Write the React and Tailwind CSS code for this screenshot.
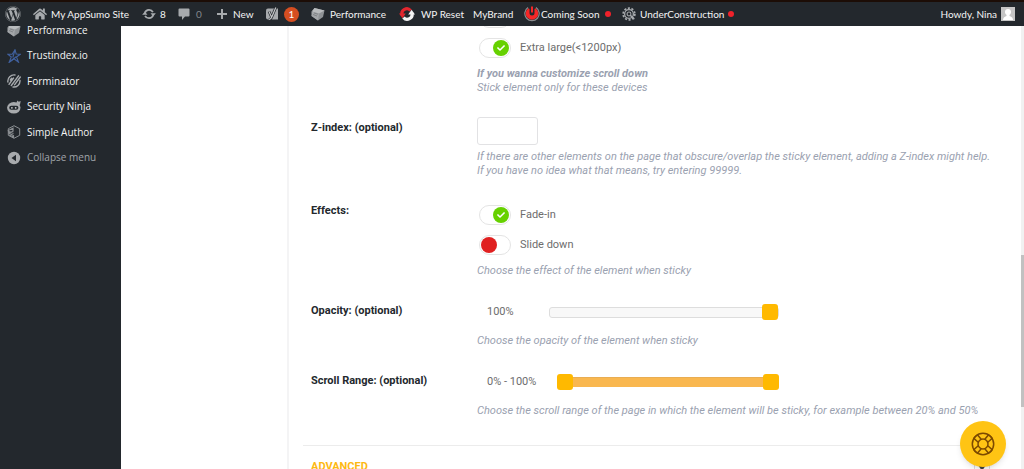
import { useState } from "react";
import { FaWordpress, FaHome, FaCheck } from "react-icons/fa";

const UpdateIcon = () => (
  <svg viewBox="0 0 20 20" className="w-3.5 h-3.5 text-[#a7aaad]" fill="none" stroke="currentColor" strokeWidth="2.6">
    <path d="M4.2 8.2A6.2 6.2 0 0 1 15.6 7.4M15.8 11.8A6.2 6.2 0 0 1 4.4 12.6" />
    <path d="M0.2 11.2h7.600L4.1 6.600zM12.200 8.8h7.600L15.9 13.400z" fill="currentColor" stroke="none" />
  </svg>
);

const CommentIcon = () => (
  <svg viewBox="0 0 12 14" className="w-3 h-3.5 text-[#a7aaad]" fill="currentColor">
    <path d="M1.5 1.5h9q1 0 1 1v6q0 1-1 1H7L4 13V9.500H1.500q-1 0-1-1v-6q0-1 1-1z" />
  </svg>
);

const PlusIcon = () => (
  <svg viewBox="0 0 10 10" className="w-2.5 h-2.5 text-[#a7aaad]" fill="currentColor">
    <path d="M4 0h2v4h4v2H6v4H4V6H0V4h4z" />
  </svg>
);

const YoastIcon = () => (
  <svg viewBox="0 0 14 14" className="w-3.5 h-3.5">
    <path d="M3 1.500h7.500l2.500 0V12.500H3q-2 0-2-2v-7q0-2 2-2z" fill="#a7aaad" />
    <path d="M4 4.500l2.500 5.500M11 0L6.800 10Q6 12.500 3.800 12.800" fill="none" stroke="#23282d" strokeWidth="2.600" />
    <path d="M4 4.500l2.500 5.500M10.800 .5L6.800 10Q6 12.300 3.800 12.600" fill="none" stroke="#c4c6c8" strokeWidth="1.200" />
  </svg>
);

const CubeIcon = () => (
  <svg viewBox="0 0 14 14" className="w-3.5 h-3.5">
    <path d="M3.500 1l10 2.500-1.500 6.500-5 3.500-6.500-4.500z" fill="#8f9396" />
    <path d="M3.500 1l10 2.500-5.500 3-7.500-2z" fill="#b9bcbe" />
    <path d="M.5 4.500l7.500 2-1 7-6.500-4.500z" fill="#a3a6a9" />
    <path d="M2 7.500l4 1.500M3 6l4 1.200" stroke="#777b7e" strokeWidth=".8" />
  </svg>
);

const ResetIcon = () => (
  <svg viewBox="0 0 16 16" className="w-4 h-4" fill="none" strokeWidth="3.200">
    <path d="M3.200 9A4.800 4.800 0 0 1 11.500 4.500" stroke="#e3262e" />
    <path d="M0 7.500h6.800L3.400 12.200z" fill="#e3262e" />
    <path d="M12.800 7A4.800 4.800 0 0 1 4.500 11.500" stroke="#f4f4f4" />
    <path d="M9.200 8.500H16L12.600 3.800z" fill="#f4f4f4" />
  </svg>
);

const PowerIcon = () => (
  <svg viewBox="0 0 16 16" className="w-4 h-4">
    <path d="M4 1.500a7.200 7.200 0 1 0 8 0" fill="none" stroke="#8b8d8f" strokeWidth="1.200" />
    <path d="M4.500 2.200A6.300 6.300 0 1 0 11.500 2.200L10.500 3v4a2.500 2.500 0 0 1-5 0V3z" fill="#f52626" />
    <path d="M7 .5h2v6H7z" fill="#f52626" />
  </svg>
);

const GearIcon = () => (
  <svg viewBox="0 0 16 16" className="w-3.5 h-3.5 text-[#a7aaad]" fill="none" stroke="currentColor">
    <circle cx="8" cy="8" r="6.700" strokeWidth="2" strokeDasharray="2.400 1.800" />
    <circle cx="8" cy="8" r="5" strokeWidth="1.500" />
    <circle cx="8" cy="8" r="2.200" strokeWidth="1.200" />
    <path d="M9.500 9.500l4.500 4.500" strokeWidth="1.800" />
  </svg>
);

const StarIcon = () => (
  <svg viewBox="0 0 14 14" className="w-3.5 h-3.5" fill="none" stroke="#41619f" strokeWidth="1.100">
    <path d="M8 .8l1.200 4.200 4 .3-3.700 2.700 2 5.200L7 9.800l-4.800 3.400L4.300 8 .8 5.200h4.400z" />
    <path d="M8 .8L5.800 8.500M2.200 13.200l7-5.500" />
  </svg>
);

const ForminatorIcon = () => (
  <svg viewBox="0 0 14 14" className="w-3.5 h-3.5 text-[#a7aaad]" fill="none" stroke="currentColor" strokeWidth="1.400" strokeLinecap="round">
    <path d="M8 1A6.200 6.200 0 0 0 .9 8M6 13A6.200 6.200 0 0 0 13 6.500" />
    <path d="M2 10.300L6.500 4M4.300 11.500L11.500 1.800M7.500 10.800L13.300 3M3.300 6l1.200-1.700" />
  </svg>
);

const NinjaIcon = () => (
  <svg viewBox="0 0 14 14" className="w-3.5 h-3.5">
    <path d="M9 3.500L10.500.5l1.200 1.200 2-.6-.8 4z" fill="#a7aaad" />
    <ellipse cx="6.800" cy="7.800" rx="6.700" ry="5.800" fill="#a7aaad" />
    <rect x="2.200" y="5.800" width="9.200" height="4" rx="2" fill="#23282d" />
    <circle cx="4.900" cy="7.800" r=".9" fill="#c6c8ca" />
    <circle cx="8.700" cy="7.800" r=".9" fill="#c6c8ca" />
  </svg>
);

const AuthorIcon = () => (
  <svg viewBox="0 0 14 14" className="w-3.5 h-3.5" fill="none" stroke="#8a8e92">
    <path d="M7 .7l5.700 3v6.600L7 13.300l-5.700-3V3.700z" />
    <path d="M1.300 5.500L6 3.200v3L2 8.200zM2 8.200l4.500 2.300v2.500M2 6.500l4.500 2M2 10l4.500 2" strokeWidth="1.200" />
  </svg>
);

const CollapseIcon = () => (
  <svg viewBox="0 0 14 14" className="w-3.5 h-3.5">
    <circle cx="7" cy="7" r="6.200" fill="#a7aaad" />
    <path d="M9 3.800v6.400L4.500 7z" fill="#23282d" />
  </svg>
);

const LifebuoyIcon = () => (
  <svg viewBox="0 0 24 24" className="w-6 h-6" fill="none" stroke="#7d4a00" strokeWidth="1.500">
    <circle cx="12" cy="12" r="10.700" />
    <circle cx="12" cy="12" r="5" />
    <path d="M7.200 10.200L2.800 6.400Q4 4 6.400 2.800L10.200 7.200M16.800 10.200l4.400-3.800Q20 4 17.600 2.800L13.800 7.200M16.800 13.800l4.400 3.800Q20 20 17.600 21.200L13.800 16.800M7.200 13.800L2.800 17.600Q4 20 6.400 21.200L10.200 16.800" />
  </svg>
);

const menuItems = [
  { label: "Performance", icon: CubeIcon },
  { label: "Trustindex.io", icon: StarIcon },
  { label: "Forminator", icon: ForminatorIcon },
  { label: "Security Ninja", icon: NinjaIcon },
  { label: "Simple Author", icon: AuthorIcon },
];

const thumb =
  "[&::-webkit-slider-thumb]:appearance-none [&::-webkit-slider-thumb]:w-4 [&::-webkit-slider-thumb]:h-4 [&::-webkit-slider-thumb]:rounded-[3px] [&::-webkit-slider-thumb]:bg-[#ffb900] [&::-webkit-slider-thumb]:pointer-events-auto";

function AdminBar() {
  return (
    <header className="relative z-10 h-[26px] shrink-0 border-t-2 border-[#1c0d06] bg-[#23282d] flex items-center pl-[5px] pr-[9px] text-[10px] text-[#f4f4f4] font-[Lato,sans-serif] whitespace-nowrap">
      <a href="#" aria-label="About WordPress" className="w-7 shrink-0">
        <FaWordpress className="w-4 h-4 text-[#a7aaad]" />
      </a>
      <a href="#" className="flex items-center gap-1 w-[109px] shrink-0">
        <FaHome className="w-3.5 h-3.5 text-[#a7aaad]" />
        My AppSumo Site
      </a>
      <a href="#" className="flex items-center gap-1 w-9 shrink-0">
        <UpdateIcon />8
      </a>
      <a href="#" className="flex items-center gap-1.5 w-[39px] shrink-0 text-[#82878c]">
        <CommentIcon />0
      </a>
      <a href="#" className="flex items-center gap-1.5 w-12 shrink-0">
        <PlusIcon />
        New
      </a>
      <a href="#" className="flex items-center gap-[5px] w-[46px] shrink-0">
        <YoastIcon />
        <span className="w-[15px] h-[15px] rounded-full bg-[#d54e21] text-white leading-[15px] text-center">
          1
        </span>
      </a>
      <a href="#" className="flex items-center gap-[5px] w-[88px] shrink-0">
        <CubeIcon />
        Performance
      </a>
      <a href="#" className="flex items-center gap-1.5 w-[74px] shrink-0">
        <ResetIcon />
        WP Reset
      </a>
      <a href="#" className="w-[51px] shrink-0">
        MyBrand
      </a>
      <a href="#" className="flex items-center gap-px w-[98px] shrink-0">
        <PowerIcon />
        Coming Soon
        <span className="w-1.5 h-1.5 ml-1 rounded-full bg-[#f0222b]" />
      </a>
      <a href="#" className="flex items-center gap-1">
        <GearIcon />
        UnderConstruction
        <span className="w-1.5 h-1.5 rounded-full bg-[#f0222b]" />
      </a>
      <a href="#" className="ml-auto flex items-center gap-1">
        Howdy, Nina
        <svg viewBox="0 0 14 14" className="w-3.5 h-3.5">
          <rect width="14" height="14" fill="#c5c5c5" />
          <circle cx="7" cy="5" r="3" fill="#fff" />
          <path d="M2 13q0-3 3.500-4V7h3v2q3.500 1 3.500 4z" fill="#fff" />
        </svg>
      </a>
    </header>
  );
}

function Sidebar() {
  return (
    <nav className="w-[121px] shrink-0 bg-[#23282d] text-[10px] text-[#f4f4f4] font-['Open_Sans',sans-serif]">
      <div className="-mt-2 h-[152px] flex flex-col justify-between pl-[7px]">
        {menuItems.map((item) => (
          <a key={item.label} href="#" className="h-6 flex items-center gap-1.5">
            <item.icon />
            {item.label}
          </a>
        ))}
        <button className="h-6 flex items-center gap-1.5 text-[#a0a5aa]">
          <CollapseIcon />
          Collapse menu
        </button>
      </div>
    </nav>
  );
}

function Toggle({ label, checked: initial, hideLabel }) {
  const [checked, setChecked] = useState(initial);

  return (
    <label className="relative h-[21px] flex items-center gap-[9px] pl-0.5 text-[#6d6d6d]">
      <input
        type="checkbox"
        aria-label={label}
        checked={checked}
        onChange={() => setChecked(!checked)}
        className="appearance-none w-8 h-5 px-px flex items-center rounded-full border border-[#e4e4e4] bg-white before:w-4 before:h-4 before:rounded-full before:bg-[#e02020] checked:justify-end checked:before:bg-[#66d100]"
      />
      {checked && (
        <FaCheck className="absolute left-5 w-2 h-2 text-white pointer-events-none" />
      )}
      {!hideLabel && label}
    </label>
  );
}

function Row({ label, htmlFor, children }) {
  return (
    <div className="flex py-[13px] pl-2">
      <label htmlFor={htmlFor} className="w-[166px] shrink-0 font-bold text-[#23282d]">
        {label}
      </label>
      <div className="flex-1">{children}</div>
    </div>
  );
}

function Hint({ children }) {
  return <p className="italic text-[#9aa1b0]">{children}</p>;
}

export default function App() {
  const [zIndex, setZIndex] = useState("");
  const [opacity, setOpacity] = useState(100);
  const [from, setFrom] = useState(0);
  const [to, setTo] = useState(100);

  return (
    <div className="h-screen flex flex-col overflow-hidden bg-white">
      <AdminBar />

      <div className="flex-1 min-h-0 flex">
        <Sidebar />

        <main className="flex-1 min-w-0 ml-[166px] border-l-2 border-[#f4f4f5] pl-3.5 text-[11px] leading-[14px] font-[Roboto,sans-serif]">
          <div className="-mt-8">
            <Row>
              <div className="flex flex-col gap-[9px]">
                <Toggle label="Large" checked hideLabel />
                <Toggle label="Extra large(<1200px)" checked />
                <Hint>
                  <strong>If you wanna customize scroll down</strong>
                  <br />
                  Stick element only for these devices
                </Hint>
              </div>
            </Row>

            <Row label="Z-index: (optional)" htmlFor="z-index">
              <div className="-mt-1 flex flex-col items-start gap-[5px]">
                <input
                  id="z-index"
                  type="text"
                  value={zIndex}
                  onChange={(e) => setZIndex(e.target.value)}
                  className="w-[61px] h-7 px-2 rounded-[3px] border border-[#e2e2e4]"
                />
                <Hint>
                  If there are other elements on the page that obscure/overlap the sticky element, adding a Z-index might help.
                  <br />
                  If you have no idea what that means, try entering 99999.
                </Hint>
              </div>
            </Row>

            <Row label="Effects:">
              <div className="flex flex-col gap-[9px]">
                <Toggle label="Fade-in" checked />
                <Toggle label="Slide down" checked={false} />
                <Hint>Choose the effect of the element when sticky</Hint>
              </div>
            </Row>

            <Row label="Opacity: (optional)" htmlFor="opacity">
              <div className="flex items-center h-4 mb-3.5 pl-2.5">
                <span className="w-[62px] text-[#6d6d6d]">{opacity}%</span>
                <input
                  id="opacity"
                  type="range"
                  value={opacity}
                  onChange={(e) => setOpacity(e.target.value)}
                  className={`appearance-none w-[230px] h-[11px] rounded-[3px] border border-[#dddddd] bg-[#f8f8f8] ${thumb}`}
                />
              </div>
              <Hint>Choose the opacity of the element when sticky</Hint>
            </Row>

            <Row label="Scroll Range: (optional)" htmlFor="range-from">
              <div className="flex items-center h-4 mb-3.5 pl-2.5">
                <span className="w-[70px] text-[#6d6d6d]">
                  {from}% - {to}%
                </span>
                <div className="relative w-[222px] h-4 flex items-center">
                  <div className="flex-1 h-2.5 mx-2 bg-[#f9b74f] border-t border-[#e9ad52]" />
                  <input
                    id="range-from"
                    type="range"
                    value={from}
                    onChange={(e) => setFrom(Math.min(+e.target.value, to))}
                    className={`absolute inset-0 w-full appearance-none bg-transparent pointer-events-none ${thumb}`}
                  />
                  <input
                    type="range"
                    aria-label="Scroll range end"
                    value={to}
                    onChange={(e) => setTo(Math.max(+e.target.value, from))}
                    className={`absolute inset-0 w-full appearance-none bg-transparent pointer-events-none ${thumb}`}
                  />
                </div>
              </div>
              <Hint>
                Choose the scroll range of the page in which the element will be sticky, for example between 20% and 50%
              </Hint>
            </Row>
          </div>

          <div className="mt-3.5 mr-[31px] border-t border-[#ececec] pt-3.5 pl-2 flex justify-between">
            <h2 className="font-bold text-[#fdb913]">ADVANCED</h2>
            <button aria-label="Toggle section" className="w-4 h-4 flex items-center justify-center border border-[#dddddd]">
              <svg viewBox="0 0 8 6" className="w-2 h-1.5">
                <path d="M0 0h8L4 6z" fill="#444444" />
              </svg>
            </button>
          </div>
        </main>

        <div className="w-[3px] shrink-0 bg-[#f1f1f1] pt-[229px]">
          <div className="h-[152px] bg-[#c1c1c1]" />
        </div>
      </div>

      <button
        aria-label="Help"
        className="fixed right-[18px] bottom-0.5 w-[46px] h-[46px] rounded-full bg-[#ffc414] shadow-md flex items-center justify-center"
      >
        <LifebuoyIcon />
      </button>
    </div>
  );
}
